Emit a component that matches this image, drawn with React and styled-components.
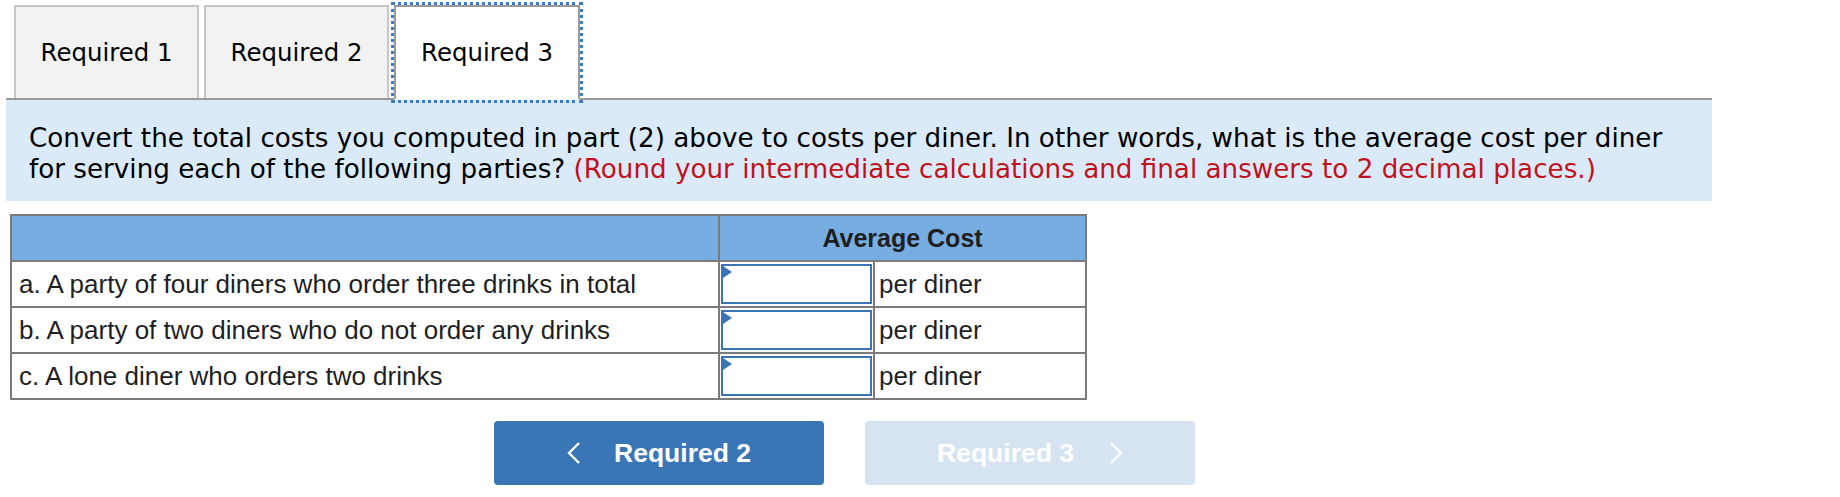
import styled, { createGlobalStyle } from "styled-components";

const GlobalStyle = createGlobalStyle`
  body {
    margin: 0;
    background: #ffffff;
  }
`

const Page = styled.div`
  padding-left: 6px;
`

const Frame = styled.div`
  width: 1706px;
`

const TabBar = styled.div`
  display: flex;
  gap: 5px;
  height: 93px;
  padding: 5px 0 0 8px;
  border-bottom: 2px solid #999999;
`

const Tab = styled.div`
  position: relative;
  box-sizing: border-box;
  width: ${(p) => (p.$active ? "186px" : "185px")};
  height: ${(p) => (p.$active ? "95px" : "93px")};
  margin-bottom: ${(p) => (p.$active ? "-2px" : "0")};
  display: flex;
  align-items: center;
  justify-content: center;
  background: ${(p) => (p.$active ? "#ffffff" : "#f2f2f2")};
  border: 2px solid ${(p) => (p.$active ? "#999999" : "#c6c6c6")};
  border-bottom: ${(p) => (p.$active ? "2px solid #ffffff" : "none")};
  outline: ${(p) => (p.$active ? "3px dotted #3a7cc9" : "none")};
  outline-offset: 0;
  font-family: "DejaVu Sans", Verdana, sans-serif;
  font-size: 24.4px;
  color: #000000;
`

const Prompt = styled.div`
  background: #dbeaf8;
  padding: 23px 30px 16px 23px;
  font-family: "DejaVu Sans", Verdana, sans-serif;
  font-size: 26.2px;
  line-height: 31px;
  color: #000000;
`

const Hint = styled.span`
  color: #c0121c;
`

const CostTable = styled.table`
  margin: 13px 0 0 4px;
  width: 1075px;
  table-layout: fixed;
  border-collapse: collapse;
  border: 2px solid #7b7b7b;
  font-family: "Liberation Sans", Arial, sans-serif;
  font-size: 26px;
  color: #1f1f1f;
`

const HeadCell = styled.th`
  height: 44px;
  padding: 0;
  background: #78ade2;
  border: 2px solid #7b7b7b;
  font-weight: bold;
  font-size: 25px;
  text-align: center;
  color: #1f1f1f;
`

const Cell = styled.td`
  height: 42px;
  padding: ${(p) => (p.$input ? "1px" : p.$unit ? "0 0 0 4px" : "0 0 0 7px")};
  border: 2px solid #7b7b7b;
  white-space: nowrap;
`

const InputWrap = styled.div`
  position: relative;
  height: 40px;

  &::before {
    content: "";
    position: absolute;
    left: 2px;
    top: 2px;
    border-left: 9px solid #3b74b4;
    border-top: 6px solid transparent;
    border-bottom: 6px solid transparent;
  }
`

const Input = styled.input`
  box-sizing: border-box;
  width: 100%;
  height: 100%;
  margin: 0;
  border: 2px solid #3b74b4;
  background: #ffffff;
  font: inherit;
`

const Nav = styled.div`
  display: flex;
  gap: 41px;
  margin-top: 21px;
  padding-left: 488px;
`

const NavButton = styled.button`
  width: 330px;
  height: 64px;
  display: flex;
  align-items: center;
  justify-content: center;
  gap: ${(p) => (p.$disabled ? "35px" : "33px")};
  border: none;
  border-radius: 4px;
  background: ${(p) => (p.$disabled ? "#d6e4f2" : "#3a76b6")};
  color: #ffffff;
  font-family: "Liberation Sans", Arial, sans-serif;
  font-weight: bold;
  font-size: 26.5px;
  padding: 0;
`

const Chevron = ({ dir }) => (
  <svg width="14" height="22" viewBox="0 0 14 22">
    <polyline
      points={dir === "left" ? "12,1 2,11 12,21" : "2,1 12,11 2,21"}
      fill="none"
      stroke="#ffffff"
      strokeWidth="2.4"
    />
  </svg>
)

const rows = [
  "a. A party of four diners who order three drinks in total",
  "b. A party of two diners who do not order any drinks",
  "c. A lone diner who orders two drinks",
]

const App = () => {
  return (
    <Page>
      <GlobalStyle />
      <Frame>
        <TabBar>
          <Tab>Required 1</Tab>
          <Tab>Required 2</Tab>
          <Tab $active>Required 3</Tab>
        </TabBar>
        <Prompt>
          Convert the total costs you computed in part (2) above to costs per diner. In other words, what is the average cost per diner for serving each of the following parties?{" "}
          <Hint>(Round your intermediate calculations and final answers to 2 decimal places.)</Hint>
        </Prompt>
      </Frame>
      <CostTable>
        <colgroup>
          <col style={{ width: 708 }} />
          <col style={{ width: 155 }} />
          <col style={{ width: 212 }} />
        </colgroup>
        <thead>
          <tr>
            <HeadCell />
            <HeadCell colSpan={2}>Average Cost</HeadCell>
          </tr>
        </thead>
        <tbody>
          {rows.map((label) => (
            <tr key={label}>
              <Cell>{label}</Cell>
              <Cell $input>
                <InputWrap>
                  <Input type="text" />
                </InputWrap>
              </Cell>
              <Cell $unit>per diner</Cell>
            </tr>
          ))}
        </tbody>
      </CostTable>
      <Nav>
        <NavButton>
          <Chevron dir="left" />
          Required 2
        </NavButton>
        <NavButton $disabled>
          Required 3
          <Chevron dir="right" />
        </NavButton>
      </Nav>
    </Page>
  )
}

export default App
